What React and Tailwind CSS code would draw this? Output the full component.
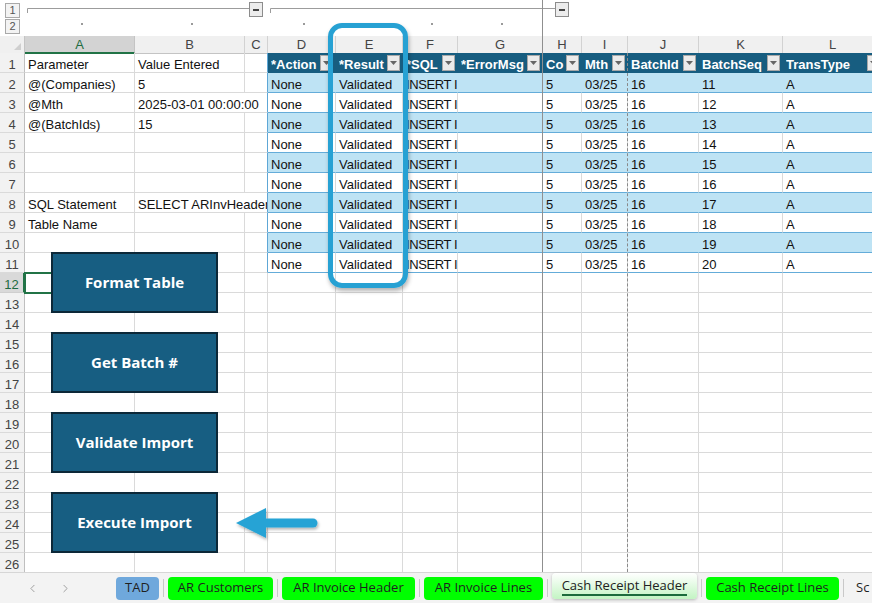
import React from "react";
import { ChevronLeft, ChevronRight } from "lucide-react";

const GRID =
  "grid grid-cols-[25px_110px_110px_23px_68px_67px_55px_85px_39px_46px_71px_84px_100px]";

const LETTERS = ["A", "B", "C", "D", "E", "F", "G", "H", "I", "J", "K", "L"];
const HEAD = ["*Action", "*Result", "*SQL", "*ErrorMsg", "Co", "Mth", "BatchId", "BatchSeq", "TransType"];

const params = [
  ["Parameter", "Value Entered"],
  ["@(Companies)", "5"],
  ["@Mth", "2025-03-01 00:00:00"],
  ["@(BatchIds)", "15"],
  ["", ""],
  ["", ""],
  ["", ""],
  ["SQL Statement", "SELECT ARInvHeader.KeyID, ARInvHeader.Co"],
  ["Table Name", ""],
  ["", ""],
  ["", ""],
];

// rows 2-11 of the import table
const tableRows = Array.from({ length: 10 }, (_, i) => [
  "None",
  "Validated",
  "INSERT INTO ARInvHeader (Co, Mth)",
  "",
  "5",
  "03/25",
  "16",
  String(11 + i),
  "A",
]);

const buttons = [
  { label: "Format Table", top: "top-[252px]" },
  { label: "Get Batch #", top: "top-[332px]" },
  { label: "Validate Import", top: "top-[412px]" },
  { label: "Execute Import", top: "top-[492px]" },
];

const tabs = [
  { name: "TAD", w: "w-[43px]", color: "bg-[#6fa8dc]" },
  { name: "AR Customers", w: "w-[105px]", color: "bg-[#00ff00]" },
  { name: "AR Invoice Header", w: "w-[133px]", color: "bg-[#00ff00]" },
  { name: "AR Invoice Lines", w: "w-[119px]", color: "bg-[#00ff00]" },
  { name: "Cash Receipt Header", w: "w-[145px]", active: true },
  { name: "Cash Receipt Lines", w: "w-[133px]", color: "bg-[#00ff00]" },
];

// excel puts text at the bottom of the cell
const txt = "px-[3px] pt-[4px] leading-[15px] whitespace-nowrap overflow-hidden";
const plain = "border-r border-b border-[#dadada] " + txt;

function OutlineBar() {
  return (
    <div className="h-9 flex shrink-0">
      <div className="w-[25px] flex flex-col items-center pt-[3px] gap-px">
        <div className="w-[15px] h-[15px] border border-[#a9a9a9] bg-[#f3f3f3] text-[11px] leading-[13px] text-center text-[#555]">1</div>
        <div className="w-[15px] h-[15px] border border-[#a9a9a9] bg-[#f3f3f3] text-[11px] leading-[13px] text-center text-[#555]">2</div>
      </div>
      <svg width="847" height="36" viewBox="25 0 847 36">
        <g stroke="#9c9c9c" strokeWidth="1" fill="none">
          <path d="M27.5 13 V8.5 H249" />
          <path d="M270.5 13 V8.5 H555" />
        </g>
        <rect x="249.5" y="2.5" width="13" height="14" fill="#ececec" stroke="#8c8c8c" />
        <rect x="253" y="9" width="6" height="2" fill="#444" />
        <rect x="555.5" y="2.5" width="13" height="14" fill="#ececec" stroke="#8c8c8c" />
        <rect x="559" y="9" width="6" height="2" fill="#444" />
        {[81, 191, 303, 431, 501].map((x) => (
          <rect key={x} x={x} y="23" width="2" height="2" fill="#9a9a9a" />
        ))}
      </svg>
    </div>
  );
}

function ColumnHeader() {
  return (
    <div className={GRID + " h-[17px] bg-[#f0f0f0] text-[13px] leading-[14px] text-[#444]"}>
      <div className="border-r border-b border-[#c4c4c4] flex items-end justify-end pr-[3px] pb-[3px]">
        <svg width="7" height="7" viewBox="0 0 7 7">
          <path d="M0 7 L7 0 V7 Z" fill="#cfcfcf" />
        </svg>
      </div>
      {LETTERS.map((l) =>
        l === "A" ? (
          <div key={l} className="bg-[#d3d3d3] border-r border-[#c4c4c4] border-b-2 border-b-[#217346] pt-[2px] text-center text-[#1e6b41]">
            {l}
          </div>
        ) : (
          <div key={l} className="border-r border-b border-[#d2d2d2] border-b-[#c4c4c4] pt-[2px] text-center">
            {l}
          </div>
        )
      )}
    </div>
  );
}

function RowNum({ n }) {
  if (n === 12) {
    return (
      <div className="bg-[#d9d9d9] border-r-2 border-r-[#217346] border-b border-b-[#cfcfcf] text-center pt-[4px] leading-[15px] text-[#1e6b41]">
        {n}
      </div>
    );
  }
  return (
    <div className="bg-[#f2f2f2] border-r border-r-[#bfbfbf] border-b border-b-[#dadada] text-center pt-[4px] leading-[15px] text-[#444]">
      {n}
    </div>
  );
}

function HeadCell({ text }) {
  return (
    <div className="bg-[#175d80] border-r border-r-[#175d80] border-b border-b-[#175d80] flex items-center pl-[3px] pr-[2px] gap-[2px]">
      <span className="flex-1 overflow-hidden whitespace-nowrap font-bold text-white pt-[4px] leading-[15px]">{text}</span>
      <span className="w-[13px] h-[16px] shrink-0 bg-[#ebebeb] border border-[#a8a8a8] flex items-center justify-center">
        <svg width="7" height="4" viewBox="0 0 7 4">
          <path d="M0 0 H7 L3.5 4 Z" fill="#666" />
        </svg>
      </span>
    </div>
  );
}

function DataCell({ text, band, tight }) {
  const cls = band
    ? "bg-[#bee3f4] border-r border-r-[#bee3f4] border-b border-b-[#64acd9]"
    : "bg-white border-r border-r-[#dadada] border-b border-b-[#64acd9]";
  return <div className={cls + " " + txt + (tight ? " tracking-[-0.4px]" : "")}>{text}</div>;
}

function Row({ n }) {
  const p = n <= 11 ? params[n - 1] : null;
  // long values run over the empty C column
  const spans = n === 3 || n === 8;
  return (
    <div className={GRID + " h-5"}>
      <RowNum n={n} />
      {p ? (
        <>
          <div className={plain}>{p[0]}</div>
          {spans ? (
            <div className={"col-span-2 border-r border-r-[#5ea7d6] border-b border-b-[#dadada] " + txt}>{p[1]}</div>
          ) : (
            <>
              <div className={plain}>{p[1]}</div>
              <div className="border-r border-r-[#5ea7d6] border-b border-b-[#dadada]" />
            </>
          )}
        </>
      ) : (
        <>
          <div className={plain} />
          <div className={plain} />
          <div className={plain} />
        </>
      )}
      {n === 1 && HEAD.map((h) => <HeadCell key={h} text={h} />)}
      {n >= 2 &&
        n <= 11 &&
        tableRows[n - 2].map((t, i) => <DataCell key={i} text={t} band={n % 2 === 0} tight={i === 2} />)}
      {n > 11 && HEAD.map((h) => <div key={h} className={plain} />)}
    </div>
  );
}

function TabBar() {
  return (
    <div className="h-[31px] shrink-0 bg-[#f3f3f3] border-t border-[#d6d6d6] flex items-center font-['Open_Sans',sans-serif] text-[13px] text-[#1f1f1f]">
      <div className="w-[116px] shrink-0 flex items-center pl-[26px] gap-[20px] text-[#8c8c8c]">
        <ChevronLeft size={13} strokeWidth={1.5} />
        <ChevronRight size={13} strokeWidth={1.5} />
      </div>
      {tabs.map((t, i) => (
        <React.Fragment key={t.name}>
          {i > 0 && <div className="w-px h-[18px] bg-[#c9c9c9] mx-[4px] shrink-0" />}
          {t.active ? (
            <div className={t.w + " self-start h-[26px] shrink-0 rounded-[4px] bg-linear-to-b from-white to-[#c3f4c3] shadow-[0_1px_3px_rgba(0,0,0,0.25)] flex items-center justify-center"}>
              <span className="border-b-2 border-[#1c6b3c] leading-[18px] text-[#222]">{t.name}</span>
            </div>
          ) : (
            <div className={t.w + " " + t.color + " h-[23px] shrink-0 rounded-[4px] flex items-center justify-center whitespace-nowrap"}>
              {t.name}
            </div>
          )}
        </React.Fragment>
      ))}
      <div className="w-px h-[18px] bg-[#c9c9c9] ml-[4px] shrink-0" />
      <div className="pl-[12px] whitespace-nowrap">Sc</div>
    </div>
  );
}

export default function App() {
  return (
    <div className="relative w-[872px] h-[603px] overflow-hidden bg-white flex flex-col font-['Liberation_Sans',Arial,sans-serif] text-[13px] text-[#111]">
      <OutlineBar />
      <div className="flex-1 overflow-hidden">
        <ColumnHeader />
        {Array.from({ length: 26 }, (_, i) => (
          <Row key={i} n={i + 1} />
        ))}
      </div>
      <TabBar />

      {/* group / page break lines */}
      <div className="absolute left-[542px] top-0 w-px h-[572px] bg-[#8f8f8f]" />
      <div className="absolute left-[627px] top-[53px] h-[519px] border-l border-dashed border-[#8a8a8a]" />

      {/* active cell A12 */}
      <div className="absolute left-[24px] top-[272px] w-[112px] h-[22px] border-2 border-[#217346]" />

      {/* macro buttons */}
      {buttons.map((b) => (
        <div
          key={b.label}
          className={"absolute left-[51px] w-[167px] h-[61px] " + b.top + " bg-[#175e82] border-2 border-[#0c2838] flex items-center justify-center text-white font-bold text-[15px] font-['Open_Sans',sans-serif]"}
        >
          {b.label}
        </div>
      ))}

      {/* highlight around Result column */}
      <div className="absolute left-[328px] top-[23px] w-[80px] h-[265px] rounded-[14px] border-[5px] border-[#27a1d3] shadow-[1px_3px_4px_rgba(0,0,0,0.3)]" />

      {/* arrow */}
      <svg className="absolute left-[230px] top-[500px]" width="95" height="48" viewBox="230 500 95 48">
        <defs>
          <filter id="arrowShadow" x="-20%" y="-30%" width="140%" height="170%">
            <feDropShadow dx="1" dy="2" stdDeviation="1.5" floodOpacity="0.3" />
          </filter>
        </defs>
        <g filter="url(#arrowShadow)" fill="#27a3d5">
          <path d="M236 523 L266 508 L266 538 Z" />
          <path d="M264 518.5 H313 a4.5 4.5 0 0 1 0 9 H264 Z" />
        </g>
      </svg>
    </div>
  );
}
